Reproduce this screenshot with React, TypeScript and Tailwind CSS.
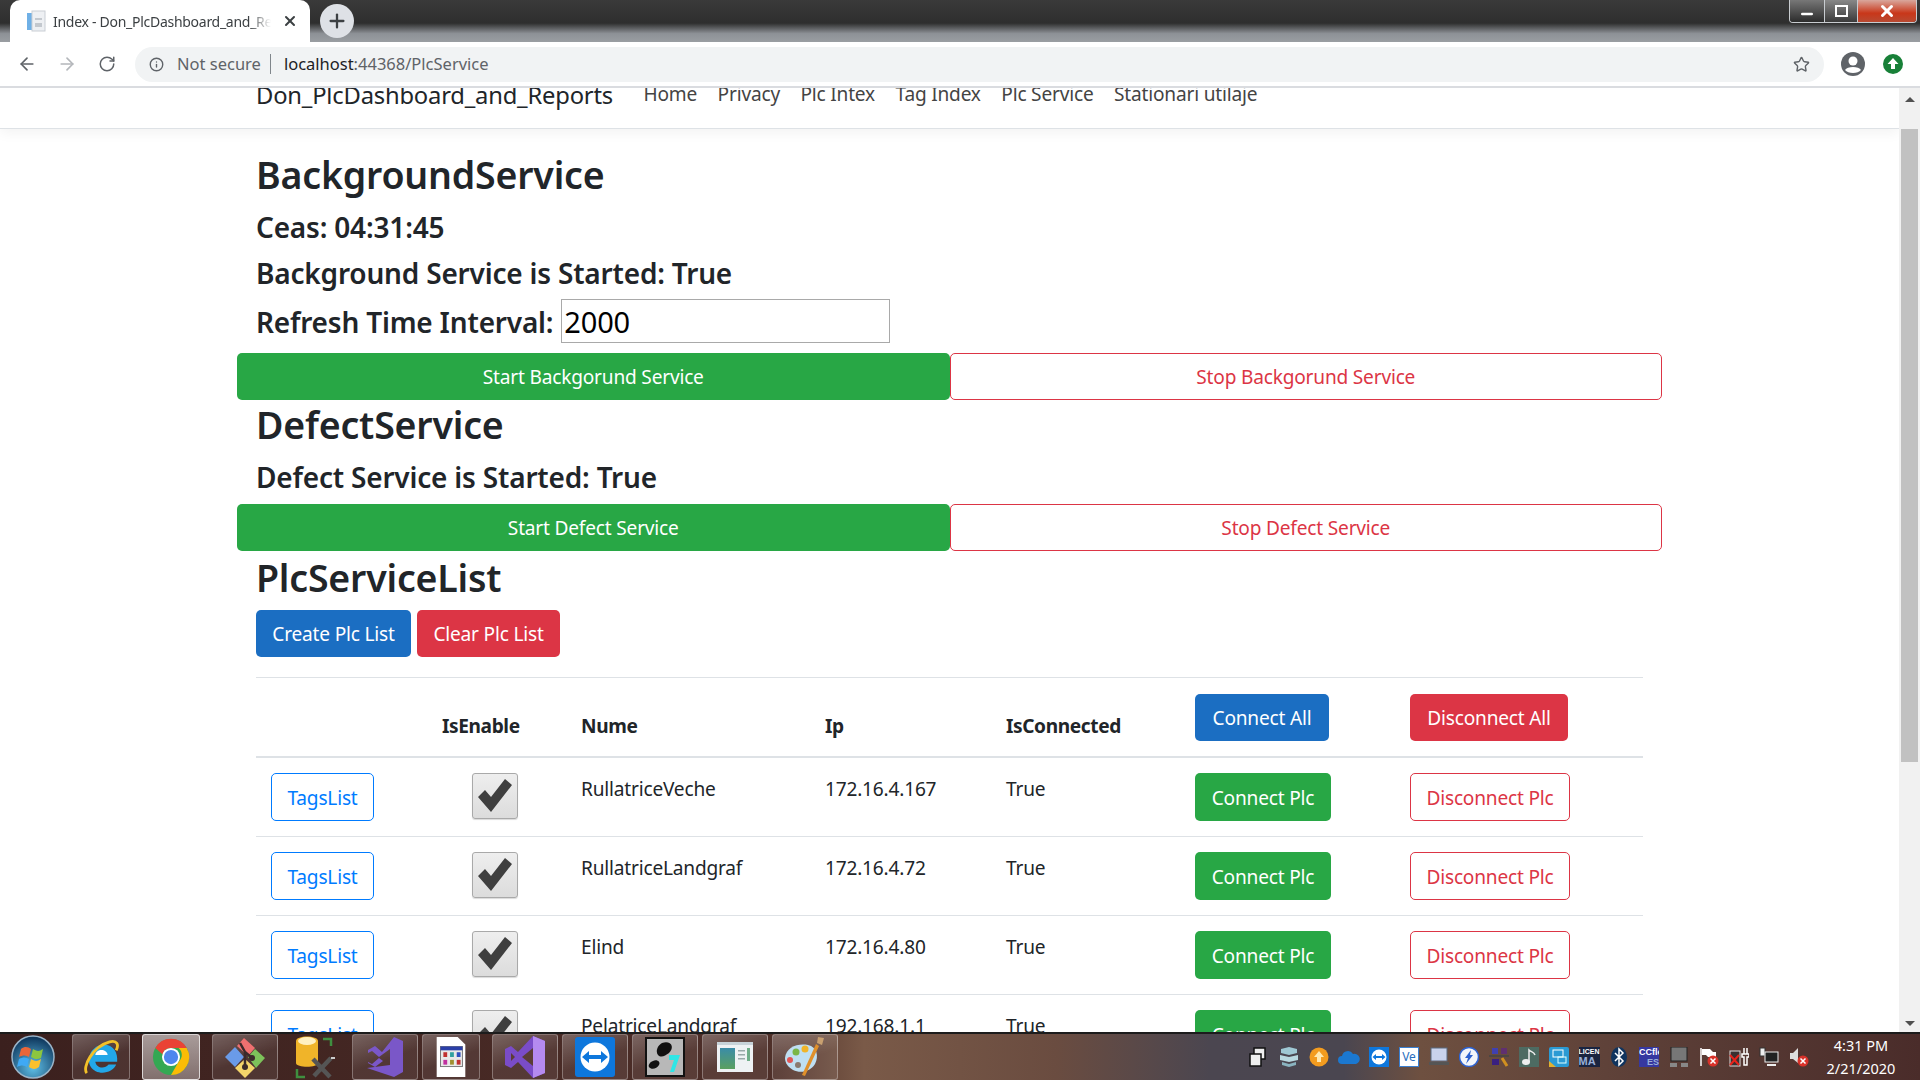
import { ArrowLeft, ArrowRight, RotateCw, Info, Star, Plus, X, Minus } from "lucide-react";
import type { ReactNode } from "react";

const PLCS = [
  { name: "RullatriceVeche", ip: "172.16.4.167" },
  { name: "RullatriceLandgraf", ip: "172.16.4.72" },
  { name: "Elind", ip: "172.16.4.80" },
  { name: "PelatriceLandgraf", ip: "192.168.1.1" },
];

const NAV = ["Home", "Privacy", "Plc Intex", "Tag Index", "Plc Service", "Stationari utilaje"];

const COLS = "grid grid-cols-[186px_139px_244px_181px_189px_215px_1fr]";

function Chrome() {
  return (
    <div className="shrink-0">
      <div className="flex h-[42px] items-end bg-[linear-gradient(180deg,#3a3a3a_0%,#2e2e2e_55%,#8d9196_80%,#9a9ea2_100%)] pl-[10px]">
        <div className="flex h-[42px] w-[300px] items-center rounded-t-[10px] bg-white pl-[16px] pr-[12px]">
          <svg width="20" height="22" viewBox="0 0 20 22" className="shrink-0">
            <rect x="1" y="3" width="5" height="17" fill="#6fb0e6" />
            <rect x="6" y="1" width="13" height="20" fill="#eef0f3" stroke="#c9ced4" />
            <rect x="9" y="8" width="7" height="2" fill="#c3c8ce" />
            <rect x="9" y="13" width="7" height="4" fill="#c3c8ce" />
          </svg>
          <span className="ml-[7px] w-[218px] overflow-hidden whitespace-nowrap text-[14px] tracking-[-0.02em] text-[#3c4043] [mask-image:linear-gradient(90deg,#000_90%,transparent)]">
            Index - Don_PlcDashboard_and_Reports
          </span>
          <X className="ml-auto h-[16px] w-[16px] text-[#3c4043]" strokeWidth={3} />
        </div>
        <div className="mb-[4px] ml-[10px] flex h-[34px] w-[34px] items-center justify-center rounded-full bg-[#dee1e6]">
          <Plus className="h-[22px] w-[22px] text-[#3c4043]" strokeWidth={2.5} />
        </div>
        <div className="mb-auto ml-auto mr-[3px] flex h-[23px] w-[128px] overflow-hidden rounded-b-[4px] border border-t-0 border-[#c8ccd0]">
          <div className="flex w-[35px] items-end justify-center border-r border-[#c8ccd0] bg-[linear-gradient(180deg,#777_0%,#2c2c2c_100%)]">
            <Minus className="h-[16px] w-[16px] text-white" strokeWidth={4} />
          </div>
          <div className="flex w-[33px] items-center justify-center border-r border-[#c8ccd0] bg-[linear-gradient(180deg,#888_0%,#3a3a3a_100%)]">
            <div className="h-[12px] w-[13px] border-2 border-white" />
          </div>
          <div className="flex flex-1 items-center justify-center bg-[linear-gradient(180deg,#d9a79c_0%,#c9371a_60%,#b84a32_100%)]">
            <X className="h-[18px] w-[18px] text-white" strokeWidth={4} />
          </div>
        </div>
      </div>
      <div className="flex h-[46px] items-center border-b-2 border-[#dadce0] bg-white">
        <ArrowLeft className="ml-[17px] h-[20px] w-[20px] text-[#5f6368]" strokeWidth={2} />
        <ArrowRight className="ml-[20px] h-[20px] w-[20px] text-[#b4b7bb]" strokeWidth={2} />
        <RotateCw className="ml-[21px] h-[18px] w-[18px] text-[#5f6368]" strokeWidth={2} />
        <div className="ml-[19px] flex h-[35px] flex-1 items-center rounded-full bg-[#f1f3f4] pl-[14px] pr-[14px]">
          <Info className="h-[15px] w-[15px] text-[#5f6368]" strokeWidth={2.2} />
          <span className="ml-[13px] text-[16.5px] text-[#5f6368]">Not secure</span>
          <span className="ml-[9px] h-[20px] w-px bg-[#80868b]" />
          <span className="ml-[13px] text-[16.5px] text-[#202124]">
            localhost<span className="text-[#5f6368]">:44368/PlcService</span>
          </span>
          <Star className="ml-auto h-[17px] w-[17px] text-[#5f6368]" strokeWidth={2} />
        </div>
        <svg width="24" height="24" viewBox="0 0 24 24" className="ml-[17px]">
          <circle cx="12" cy="12" r="12" fill="#5f6368" />
          <circle cx="12" cy="9" r="4.5" fill="#fff" />
          <path d="M4 18c2-4 14-4 16 0-3 4-13 4-16 0z" fill="#fff" />
        </svg>
        <svg width="20" height="20" viewBox="0 0 20 20" className="ml-[18px] mr-[17px]">
          <circle cx="10" cy="10" r="10" fill="#188038" />
          <path d="M10 4l5.500 6H12v5H8v-5H4.500z" fill="#fff" />
        </svg>
      </div>
    </div>
  );
}

function Scrollbar() {
  return (
    <div className="flex w-[21px] shrink-0 flex-col items-center bg-[#f1f1f1]">
      <div className="flex h-[41px] w-full items-start justify-center pt-[9px]">
        <div className="h-0 w-0 border-x-[5px] border-b-[5px] border-x-transparent border-b-[#505050]" />
      </div>
      <div className="h-[633px] w-[17px] bg-[#c1c1c1]" />
      <div className="mt-auto flex h-[17px] items-center justify-center">
        <div className="h-0 w-0 border-x-[5px] border-t-[5px] border-x-transparent border-t-[#505050]" />
      </div>
    </div>
  );
}

function WideButtons({ start, stop }: { start: string; stop: string }) {
  return (
    <div className="-mx-[19px] grid grid-cols-2">
      <button className="h-[47px] rounded-[5px] bg-[#28a745] pt-[2px] text-white">{start}</button>
      <button className="h-[47px] rounded-[5px] border border-[#dc3545] bg-white pt-[2px] text-[#dc3545]">{stop}</button>
    </div>
  );
}

function Check() {
  return (
    <div className="h-[46px] w-[46px] rounded-[3px] border border-[#a9a9a9] bg-[linear-gradient(180deg,#eeeeee_0%,#dcdcdc_100%)] shadow-[0_1px_1px_rgba(0,0,0,0.15)]">
      <svg width="44" height="44" viewBox="0 0 44 44">
        <path d="M5 23l7-7 6 7L32 5l7 6-21 27z" fill="#3f3f3f" />
      </svg>
    </div>
  );
}

function Page() {
  return (
    <div className="min-w-0 flex-1 overflow-hidden bg-white font-['Noto_Sans',sans-serif] text-[19.1px] tracking-[-0.01em] text-[#212529]">
      <div className="flex h-[41px] items-start gap-[20.5px] border-b border-[#dee2e6] pl-[256px] shadow-[0_4px_12px_rgba(0,0,0,0.05)]">
        <span className="-mt-[11px] mr-[10px] text-[23.75px] leading-[36px]">Don_PlcDashboard_and_Reports</span>
        {NAV.map((n) => (
          <span key={n} className="-mt-[9px] leading-[30px] text-[#444]">
            {n}
          </span>
        ))}
      </div>

      <div className="w-[1643px] pl-[256px]">
        <h2 className="mt-[21px] text-[37.5px] font-semibold leading-[50px]">BackgroundService</h2>
        <h4 className="mt-[9px] text-[28px] font-semibold leading-[36px]">Ceas: 04:31:45</h4>
        <h4 className="mt-[10px] text-[28px] font-semibold leading-[36px]">Background Service is Started: True</h4>
        <div className="mt-[6px] flex h-[50px] items-center">
          <span className="text-[28px] font-semibold leading-[36px]">Refresh Time Interval:</span>
          <input
            readOnly
            value="2000"
            className="-mt-[2px] ml-[8px] h-[44px] w-[329px] border border-[#a9a9a9] px-[2px] text-[29px] text-black"
          />
        </div>
        <div className="mt-[6px]">
          <WideButtons start="Start Backgorund Service" stop="Stop Backgorund Service" />
        </div>
        <h2 className="text-[37.5px] font-semibold leading-[50px]">DefectService</h2>
        <h4 className="mt-[9px] text-[28px] font-semibold leading-[36px]">Defect Service is Started: True</h4>
        <div className="mt-[9px]">
          <WideButtons start="Start Defect Service" stop="Stop Defect Service" />
        </div>
        <h2 className="mt-[2px] text-[37.5px] font-semibold leading-[50px]">PlcServiceList</h2>
        <div className="mt-[7px] flex gap-[6px]">
          <button className="h-[47px] w-[155px] rounded-[5px] bg-[#1b6ec2] pt-[2px] text-white">Create Plc List</button>
          <button className="h-[47px] w-[143px] rounded-[5px] bg-[#dc3545] pt-[2px] text-white">Clear Plc List</button>
        </div>

        <div className={`${COLS} mt-[20px] h-[81px] border-y border-[#dee2e6] border-b-2`}>
          <div />
          <div className="flex items-end pb-[15px] font-bold tracking-[-0.02em]">IsEnable</div>
          <div className="flex items-end pb-[15px] font-bold tracking-[-0.02em]">Nume</div>
          <div className="flex items-end pb-[15px] font-bold tracking-[-0.02em]">Ip</div>
          <div className="flex items-end pb-[15px] font-bold tracking-[-0.02em]">IsConnected</div>
          <div className="pt-[16px]">
            <button className="h-[47px] w-[134px] rounded-[5px] bg-[#1b6ec2] pt-[2px] text-white">Connect All</button>
          </div>
          <div className="pt-[16px]">
            <button className="h-[47px] w-[158px] rounded-[5px] bg-[#dc3545] pt-[2px] text-white">Disconnect All</button>
          </div>
        </div>

        {PLCS.map((p) => (
          <div key={p.name} className={`${COLS} h-[79px] border-b border-[#dee2e6]`}>
            <div className="pl-[15px] pt-[15px]">
              <button className="h-[48px] w-[103px] rounded-[5px] border border-[#007bff] pt-[2px] text-[#007bff]">TagsList</button>
            </div>
            <div className="pl-[30px] pt-[15px]">
              <Check />
            </div>
            <div className="pt-[16px] leading-[30px]">{p.name}</div>
            <div className="pt-[16px] leading-[30px]">{p.ip}</div>
            <div className="pt-[16px] leading-[30px]">True</div>
            <div className="pt-[15px]">
              <button className="h-[48px] w-[136px] rounded-[5px] bg-[#28a745] pt-[2px] text-white">Connect Plc</button>
            </div>
            <div className="pt-[15px]">
              <button className="h-[48px] w-[160px] rounded-[5px] border border-[#dc3545] pt-[2px] text-[#dc3545]">Disconnect Plc</button>
            </div>
          </div>
        ))}
      </div>
    </div>
  );
}

const TASK_ICONS: { w: string; mr: string; plain?: boolean; active?: boolean; icon: ReactNode }[] = [
  {
    w: "w-[58px]",
    mr: "mr-[12px]",
    icon: (
      <svg width="38" height="38" viewBox="0 0 40 40">
        <path d="M31 25H14c1 7 10 8 14 3h8c-4 10-21 12-27 2-5-10 2-23 14-23 10 0 15 8 14 18z" fill="#22a7e8" />
        <path d="M14 18h13c-1-7-12-7-13 0z" fill="#fff" />
        <path d="M5 37C0 31 11 9 29 4c8-2 10 3 7 9" fill="none" stroke="#f2c028" strokeWidth="3" />
      </svg>
    ),
  },
  {
    w: "w-[58px]",
    mr: "mr-[12px]",
    active: true,
    icon: (
      <svg width="38" height="38" viewBox="0 0 40 40">
        <circle cx="20" cy="20" r="19" fill="#34a853" />
        <path d="M3.500 10.500A19 19 0 0 1 36.500 10.500H20a9.500 9.500 0 0 0-9 6.500z" fill="#ea4335" />
        <path d="M36.500 10.500A19 19 0 0 1 20 39l8-14a9.500 9.500 0 0 0 0-14.500z" fill="#fbbc05" />
        <circle cx="20" cy="20" r="9.500" fill="#fff" />
        <circle cx="20" cy="20" r="7.500" fill="#4e86ee" />
      </svg>
    ),
  },
  {
    w: "w-[66px]",
    mr: "mr-[4px]",
    icon: (
      <svg width="42" height="42" viewBox="0 0 42 42">
        <path d="M13 10l7-8 11 10-7 8z" fill="#ee7070" />
        <path d="M1 21l10-10 9 10-9 10z" fill="#6a9be8" />
        <path d="M24 21l7-8 10 9-9 10z" fill="#7dc25a" />
        <path d="M11 32l10-9 10 9-10 10z" fill="#f4d56a" />
        <path d="M16 7l5 9v13M21 16l7 6" fill="none" stroke="#3a2a2a" strokeWidth="2.500" />
        <circle cx="21" cy="31" r="3" fill="#3a2a2a" />
        <circle cx="28" cy="22" r="3" fill="#3a2a2a" />
      </svg>
    ),
  },
  {
    w: "w-[66px]",
    mr: "mr-[4px]",
    plain: true,
    icon: (
      <svg width="44" height="44" viewBox="0 0 44 44">
        <path d="M3 6c0-6 22-6 22 0v22c0 5-22 5-22 0z" fill="#f0b429" />
        <ellipse cx="14" cy="6" rx="9" ry="4" fill="#fff0c0" />
        <path d="M30 4h8v7M4 34v8h8" fill="none" stroke="#3f8f3f" strokeWidth="2.500" />
        <path d="M20 24l17 18M38 23L21 41" stroke="#555" strokeWidth="4.500" />
        <path d="M38 23l4 0" stroke="#ccc" strokeWidth="2" />
      </svg>
    ),
  },
  {
    w: "w-[66px]",
    mr: "mr-[4px]",
    icon: (
      <svg width="40" height="42" viewBox="0 0 40 42">
        <path d="M29 1l9 4v31l-9 5-27-9 23-3V13L14 21l-7-6-4 2v9l4 2 7-6 4 3-8 6-7-4V14l7-4 7 6z" fill="#7a57c8" />
      </svg>
    ),
  },
  {
    w: "w-[58px]",
    mr: "mr-[12px]",
    icon: (
      <svg width="32" height="42" viewBox="0 0 32 44">
        <path d="M1 1h22l8 8v34H1z" fill="#fff" />
        <rect x="5" y="11" width="23" height="21" fill="#e8e8e8" stroke="#777" />
        <rect x="5" y="11" width="23" height="4" fill="#2a3fa8" />
        <rect x="8" y="17" width="4" height="5" fill="#c03030" />
        <rect x="15" y="17" width="4" height="5" fill="#30a0a0" />
        <rect x="22" y="17" width="4" height="5" fill="#3050c0" />
        <rect x="8" y="25" width="4" height="5" fill="#c030a0" />
        <rect x="15" y="25" width="4" height="5" fill="#a09030" />
        <rect x="22" y="25" width="4" height="5" fill="#c03030" />
      </svg>
    ),
  },
  {
    w: "w-[66px]",
    mr: "mr-[4px]",
    icon: (
      <svg width="42" height="44" viewBox="0 0 42 44">
        <path d="M29 1l12 5v32l-12 5L14 27l-7 6-6-3V14l6-3 7 6z" fill="#7a4cc8" />
        <path d="M29 1l12 5v32l-12 5z" fill="#b58af0" />
        <path d="M29 13v18l-11-9z" fill="#5b3d35" />
        <path d="M7 18v8l4-4z" fill="#5b3d35" />
      </svg>
    ),
  },
  {
    w: "w-[66px]",
    mr: "mr-[4px]",
    icon: (
      <svg width="40" height="40" viewBox="0 0 40 40">
        <rect width="40" height="40" rx="3" fill="#0e77dc" />
        <circle cx="20" cy="20" r="14.500" fill="#fff" />
        <path d="M7 20l7-6v4h12v-4l7 6-7 6v-4H14v4z" fill="#0e77dc" />
      </svg>
    ),
  },
  {
    w: "w-[66px]",
    mr: "mr-[4px]",
    icon: (
      <svg width="40" height="40" viewBox="0 0 40 40">
        <rect x="1" y="1" width="38" height="38" fill="#b8b8b8" stroke="#111" strokeWidth="2" />
        <path d="M17 6c9-3 13 4 7 10-4 3-8 5-11 2-3-4 0-10 4-12z" fill="#111" />
        <path d="M8 24c4-2 8 1 6 4-2 4-8 5-10 2-1-2 1-5 4-6z" fill="#111" />
        <path d="M24 18h11l-6 17h-4l4-12h-5z" fill="#2fe6e6" />
      </svg>
    ),
  },
  {
    w: "w-[66px]",
    mr: "mr-[4px]",
    icon: (
      <svg width="36" height="30" viewBox="0 0 36 30">
        <defs>
          <linearGradient id="winfill" x1="0" y1="0" x2="0" y2="1">
            <stop offset="0" stopColor="#3a8ca8" />
            <stop offset="1" stopColor="#5aa060" />
          </linearGradient>
        </defs>
        <rect width="36" height="30" fill="#eef2f4" />
        <rect width="36" height="3" fill="#c7d3d9" />
        <rect x="3" y="6" width="15" height="21" fill="url(#winfill)" />
        <rect x="21" y="8" width="7" height="1.500" fill="#9aa" />
        <rect x="21" y="12" width="7" height="1.500" fill="#9aa" />
        <rect x="21" y="16" width="7" height="1.500" fill="#9aa" />
        <rect x="30" y="6" width="3" height="13" fill="#6fae8a" />
      </svg>
    ),
  },
  {
    w: "w-[66px]",
    mr: "mr-[4px]",
    icon: (
      <svg width="42" height="42" viewBox="0 0 42 42">
        <path d="M1 22C2 11 14 7 24 9c9 2 11 11 7 19-4 7-14 10-22 6-5-3-8-7-8-12z" fill="#bfdff2" />
        <circle cx="12" cy="16" r="3.500" fill="#7ab648" />
        <circle cx="21" cy="13" r="3.500" fill="#f0b429" />
        <circle cx="6" cy="24" r="3" fill="#e25555" />
        <circle cx="14" cy="29" r="3" fill="#8a7a70" />
        <path d="M32 8l3 2-14 30-3-1z" fill="#e0902b" />
        <path d="M34 1l6 1-2 7-5-2z" fill="#c9a070" />
      </svg>
    ),
  },
];

const TRAY: ReactNode[] = [
  <svg key="a" width="20" height="20" viewBox="0 0 20 20">
    <rect x="5" y="1" width="11" height="11" fill="#eee" stroke="#111" strokeWidth="1.500" />
    <rect x="1" y="7" width="11" height="12" fill="#eee" stroke="#111" strokeWidth="1.500" />
  </svg>,
  <svg key="b" width="20" height="22" viewBox="0 0 20 22">
    <path d="M2 3l8-2 8 2v4l-8 2-8-2z" fill="#9fc8d4" />
    <path d="M1 9l9 2 9-2v5l-9 2-9-2z" fill="#b8d8e0" />
    <path d="M3 16l7 2 7-2v3l-7 2-7-2z" fill="#8ab4c0" />
  </svg>,
  <svg key="c" width="20" height="20" viewBox="0 0 20 20">
    <circle cx="10" cy="10" r="9.500" fill="#f39c1f" />
    <path d="M10 4l5 6h-3v5H8v-5H5z" fill="#ffe9b0" />
  </svg>,
  <svg key="d" width="22" height="14" viewBox="0 0 22 14">
    <path d="M4 14a4 4 0 0 1 0-8 6 6 0 0 1 11-2 5 5 0 0 1 3 10z" fill="#1b78d0" />
  </svg>,
  <svg key="e" width="20" height="20" viewBox="0 0 20 20">
    <rect width="20" height="20" fill="#0e77dc" />
    <circle cx="10" cy="10" r="7.500" fill="#fff" />
    <path d="M3.500 10l3.500-3v2h6V7l3.500 3-3.500 3v-2H7v2z" fill="#0e77dc" />
  </svg>,
  <div key="f" className="flex h-[20px] w-[20px] items-center justify-center border border-[#3a7fd0] bg-white text-[12px] leading-none text-[#2a6fc0]">
    Ve
  </div>,
  <svg key="g" width="20" height="20" viewBox="0 0 20 20">
    <rect x="2" y="1" width="16" height="13" fill="#c9d2ec" stroke="#5a6a80" />
    <rect x="0" y="15" width="20" height="3" fill="#555" />
  </svg>,
  <svg key="h" width="20" height="20" viewBox="0 0 20 20">
    <circle cx="10" cy="10" r="9.500" fill="#f2f6fb" stroke="#2d62d0" strokeWidth="1.500" />
    <path d="M12 3L6 11h3l-2 6 7-9h-3z" fill="#2d62d0" />
  </svg>,
  <svg key="i" width="20" height="20" viewBox="0 0 20 20">
    <rect x="3" y="1" width="6" height="6" fill="#4040b0" />
    <rect x="12" y="1" width="6" height="6" fill="#603070" />
    <rect x="3" y="12" width="7" height="6" fill="#3a2080" />
    <path d="M0 9h20" stroke="#444" strokeWidth="1.500" />
    <path d="M13 11l5 8" stroke="#d09020" strokeWidth="3" />
  </svg>,
  <svg key="j" width="20" height="20" viewBox="0 0 20 20">
    <rect width="20" height="20" fill="#4d6b62" />
    <ellipse cx="7" cy="15" rx="4" ry="3" fill="#eee" />
    <path d="M10 15V3c2 2 5 2 6 5" fill="none" stroke="#eee" strokeWidth="1.500" />
  </svg>,
  <svg key="k" width="20" height="20" viewBox="0 0 20 20">
    <rect width="20" height="20" rx="2" fill="#2a9ad4" />
    <rect x="4" y="3" width="10" height="7" fill="none" stroke="#fff" />
    <rect x="9" y="10" width="8" height="6" fill="none" stroke="#dff" />
    <path d="M0 14l7 6H0z" fill="#e0b030" />
  </svg>,
  <div key="l" className="flex h-[20px] w-[21px] flex-col overflow-hidden bg-[#1a2440] font-['Liberation_Sans',sans-serif] text-white">
    <span className="text-[7px] font-bold leading-[9px]">LICEN</span>
    <span className="text-[11px] font-bold leading-[11px] text-[#9ab0d8]">MA</span>
  </div>,
  <svg key="m" width="16" height="20" viewBox="0 0 16 20">
    <ellipse cx="8" cy="10" rx="8" ry="10" fill="#10345e" />
    <path d="M4 6l8 8-4 4V2l4 4-8 8" fill="none" stroke="#fff" strokeWidth="1.500" />
  </svg>,
  <div key="n" className="flex h-[20px] w-[20px] flex-col overflow-hidden bg-[#3638a0] font-['Liberation_Sans',sans-serif] text-white">
    <span className="whitespace-nowrap text-[9px] font-bold leading-[10px]">CCfle</span>
    <span className="pl-[8px] text-[9px] font-bold leading-[10px] text-[#9ab0d8]">ES</span>
  </div>,
  <svg key="o" width="18" height="20" viewBox="0 0 18 20">
    <rect x="1" y="0" width="16" height="14" fill="#777" stroke="#222" />
    <rect x="0" y="16" width="7" height="4" fill="#888" />
    <rect x="11" y="16" width="7" height="4" fill="#888" />
  </svg>,
  <svg key="p" width="20" height="20" viewBox="0 0 20 20">
    <path d="M2 1v18" stroke="#fff" strokeWidth="1.500" />
    <path d="M3 2h8l3 3h3v5H9l-2-2H3z" fill="#fff" />
    <circle cx="14" cy="14" r="5.500" fill="#d8322a" />
    <path d="M11.500 11.500l5 5M16.500 11.500l-5 5" stroke="#fff" strokeWidth="1.500" />
  </svg>,
  <svg key="q" width="20" height="20" viewBox="0 0 20 20">
    <rect x="1" y="4" width="10" height="15" fill="#3a3030" stroke="#ddd" />
    <path d="M1 8l9 10M10 8l-9 10" stroke="#e8221a" strokeWidth="2" />
    <path d="M15 1v6M18 1v6M13 7h7v3h-2v8h-3v-8h-2z" fill="none" stroke="#fff" strokeWidth="1.500" />
  </svg>,
  <svg key="r" width="20" height="20" viewBox="0 0 20 20">
    <rect x="1" y="1" width="5" height="8" fill="#eee" stroke="#333" />
    <rect x="6" y="5" width="13" height="10" fill="#222" stroke="#eee" />
    <rect x="8" y="17" width="9" height="2" fill="#eee" />
  </svg>,
  <svg key="s" width="20" height="20" viewBox="0 0 20 20">
    <path d="M1 6h3l5-5v15l-5-4H1z" fill="#ddd" />
    <circle cx="14" cy="14" r="5.500" fill="#d8322a" />
    <path d="M11.500 11.500l5 5M16.500 11.500l-5 5" stroke="#fff" strokeWidth="1.500" />
  </svg>,
];

function Taskbar() {
  return (
    <div className="flex h-[48px] shrink-0 items-center border-t-2 border-[#1c1c1c] bg-[linear-gradient(90deg,#3b201e_0%,#4d2e28_40%,#7a5a48_45%,#6a4c40_55%,#4b4650_63%,#4a4650_70%,#6e5040_74%,#5d4038_85%,#4a2c2a_100%)]">
      <div className="flex h-[46px] w-[72px] items-center justify-center pr-[6px]">
        <svg width="44" height="44" viewBox="0 0 44 44">
          <defs>
            <radialGradient id="orb" cx="0.5" cy="0.75" r="0.7">
              <stop offset="0" stopColor="#5fc0e8" />
              <stop offset="1" stopColor="#103a60" />
            </radialGradient>
          </defs>
          <circle cx="22" cy="22" r="21" fill="url(#orb)" stroke="#9ab4c8" strokeWidth="1.500" />
          <path d="M10 14c4-3 7-2 10 0l-2 8c-3-2-6-2-10 0z" fill="#e8663a" />
          <path d="M22 14c3 2 6 3 10 0l-2 9c-4 2-7 1-10-1z" fill="#8cc63f" />
          <path d="M8 24c4-2 7-2 10 0l-2 8c-3-2-6-2-10 0z" fill="#3fa9f5" />
          <path d="M20 24c3 2 6 3 10 0l-2 8c-4 3-7 2-10 0z" fill="#fbc02d" />
        </svg>
      </div>
      {TASK_ICONS.map((t, i) => (
        <div
          key={i}
          className={`flex h-[46px] items-center justify-center rounded-[3px] ${t.w} ${t.mr} ${
            t.plain
              ? ""
              : t.active
                ? "border border-white/70 bg-[linear-gradient(180deg,rgba(255,255,255,0.55),rgba(255,255,255,0.35))]"
                : "border border-white/30 bg-[linear-gradient(160deg,rgba(255,255,255,0.28),rgba(255,255,255,0.08)_55%)]"
          }`}
        >
          {t.icon}
        </div>
      ))}
      <div className="ml-auto flex items-center">
        {TRAY.map((icon, i) => (
          <div key={i} className="flex w-[30px] items-center justify-center">
            {icon}
          </div>
        ))}
      </div>
      <div className="ml-[9px] mr-[21px] w-[76px] text-center text-[14.5px] leading-[23px] text-white">
        <div>4:31 PM</div>
        <div>2/21/2020</div>
      </div>
    </div>
  );
}

export default function App() {
  return (
    <div className="flex h-screen flex-col overflow-hidden font-['Noto_Sans',sans-serif]">
      <Chrome />
      <div className="flex min-h-0 flex-1">
        <Page />
        <Scrollbar />
      </div>
      <Taskbar />
    </div>
  );
}
